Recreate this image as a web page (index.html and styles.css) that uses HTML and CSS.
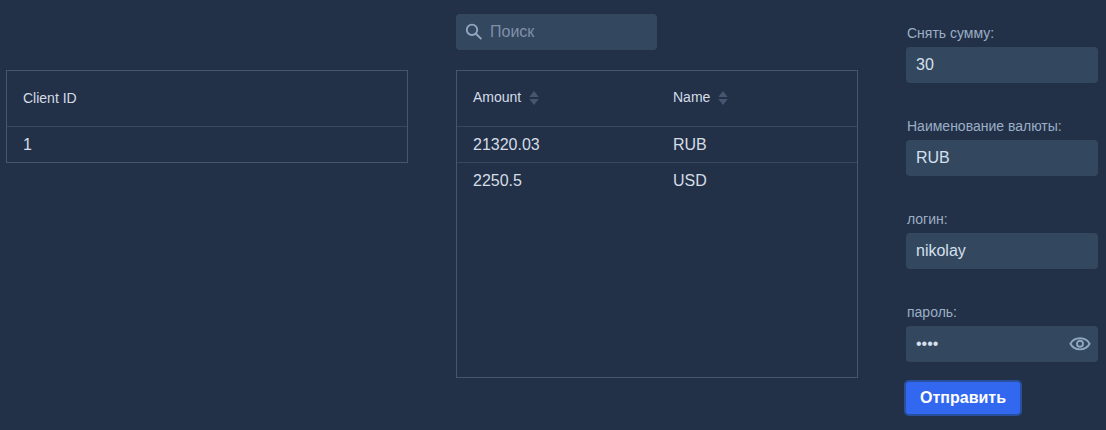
FILE: index.html
```html
<!DOCTYPE html>
<html lang="ru">
<head>
<meta charset="utf-8">
<title>Client accounts</title>
<link rel="stylesheet" href="styles.css">
</head>
<body>
<main class="page">
  <section class="clients">
    <div class="grid">
      <div class="row head"><span>Client ID</span></div>
      <div class="row"><span>1</span></div>
    </div>
  </section>
  <section class="accounts">
    <label class="search">
      <svg class="search-icon" width="18" height="18" viewBox="0 0 18 18"><circle cx="6" cy="6.8" r="5.2" /><path d="M9.7 10.5L15.4 16.2" /></svg>
      <input type="text" placeholder="Поиск">
    </label>
    <div class="grid tall">
      <div class="row head sortable">
        <span>Amount <svg class="sort" width="10" height="14" viewBox="0 0 10 14"><path d="M5 0L9.7 6H.3zM.3 8H9.7L5 14z" /></svg></span>
        <span>Name <svg class="sort" width="10" height="14" viewBox="0 0 10 14"><path d="M5 0L9.7 6H.3zM.3 8H9.7L5 14z" /></svg></span>
      </div>
      <div class="row"><span>21320.03</span><span>RUB</span></div>
      <div class="row"><span>2250.5</span><span>USD</span></div>
    </div>
  </section>
  <form class="withdraw">
    <label class="field">Снять сумму:<input type="text" value="30"></label>
    <label class="field">Наименование валюты:<input type="text" value="RUB"></label>
    <label class="field">логин:<input type="text" value="nikolay"></label>
    <label class="field">пароль:
      <span class="password"><span class="dots">••••</span>
        <svg class="eye" width="22" height="14" viewBox="0 0 22 14"><path d="M1.4 6.8C3.3 3.1 6.8 1.2 11 1.2S18.7 3.1 20.6 6.8C18.7 10.5 15.2 12.4 11 12.4S3.3 10.5 1.4 6.8Z" /><circle cx="11" cy="6.8" r="3" /></svg>
      </span>
    </label>
    <button type="button" class="submit">Отправить</button>
  </form>
</main>
</body>
</html>
```
FILE: styles.css
```css
* { box-sizing: border-box; }
body {
  margin: 0;
  background: #223148;
  color: #d5dce6;
  font: 16px/20px "Liberation Sans", Arial, sans-serif;
}
.page {
  display: flex;
  height: 430px;
  padding-left: 6px;
  overflow: hidden;
}
.clients { width: 402px; padding-top: 70px; }
.accounts { width: 402px; margin-left: 48px; padding-top: 14px; }
.withdraw { width: 192px; margin-left: 48px; padding-top: 23px; }
.grid { border: 1px solid #475670; }
.tall { height: 308px; }
.row { display: flex; height: 36px; padding: 0 16px; align-items: center; }
.row + .row { border-top: 1px solid #364862; }
.row span { flex: none; width: 200px; }
.head { height: 55px; padding-bottom: 2px; font-size: 14px; }
.sortable { padding-bottom: 4px; }
.sort { margin-left: 4px; vertical-align: -3px; fill: #475670; }
.search {
  display: flex;
  align-items: center;
  width: 201px;
  height: 36px;
  margin-bottom: 20px;
  padding-left: 10px;
  border-radius: 4px;
  background: #33475f;
}
.search-icon { overflow: visible; fill: none; stroke: #91a6c1; stroke-width: 1.9; }
.search input {
  width: 160px;
  margin: 0 0 0 6px;
  padding: 0;
  border: 0;
  background: none;
  color: #d5e0ee;
  font: inherit;
}
.search input::placeholder { color: #8090a8; }
.field {
  display: block;
  margin-bottom: 33px;
  padding-left: 1px;
  color: #9caec5;
  font-size: 14px;
  line-height: 20px;
}
.field input, .password {
  display: flex;
  width: 192px;
  height: 36px;
  margin: 4px 0 0 -1px;
  padding: 0 10px;
  border: 0;
  border-radius: 4px;
  background: #33475f;
  color: #d5e0ee;
  font: 16px/20px "Liberation Sans", Arial, sans-serif;
}
.password { align-items: center; justify-content: space-between; padding-right: 7px; }
.eye { fill: none; stroke: #91a6c1; stroke-width: 1.9; }
.submit {
  width: 118px;
  height: 36px;
  margin: -15px 0 0 -2px;
  padding: 0;
  display: block;
  border: 2px solid #28509f;
  border-radius: 5px;
  background: #3268f0;
  color: #fff;
  font: bold 16px/20px "Liberation Sans", Arial, sans-serif;
}
```
